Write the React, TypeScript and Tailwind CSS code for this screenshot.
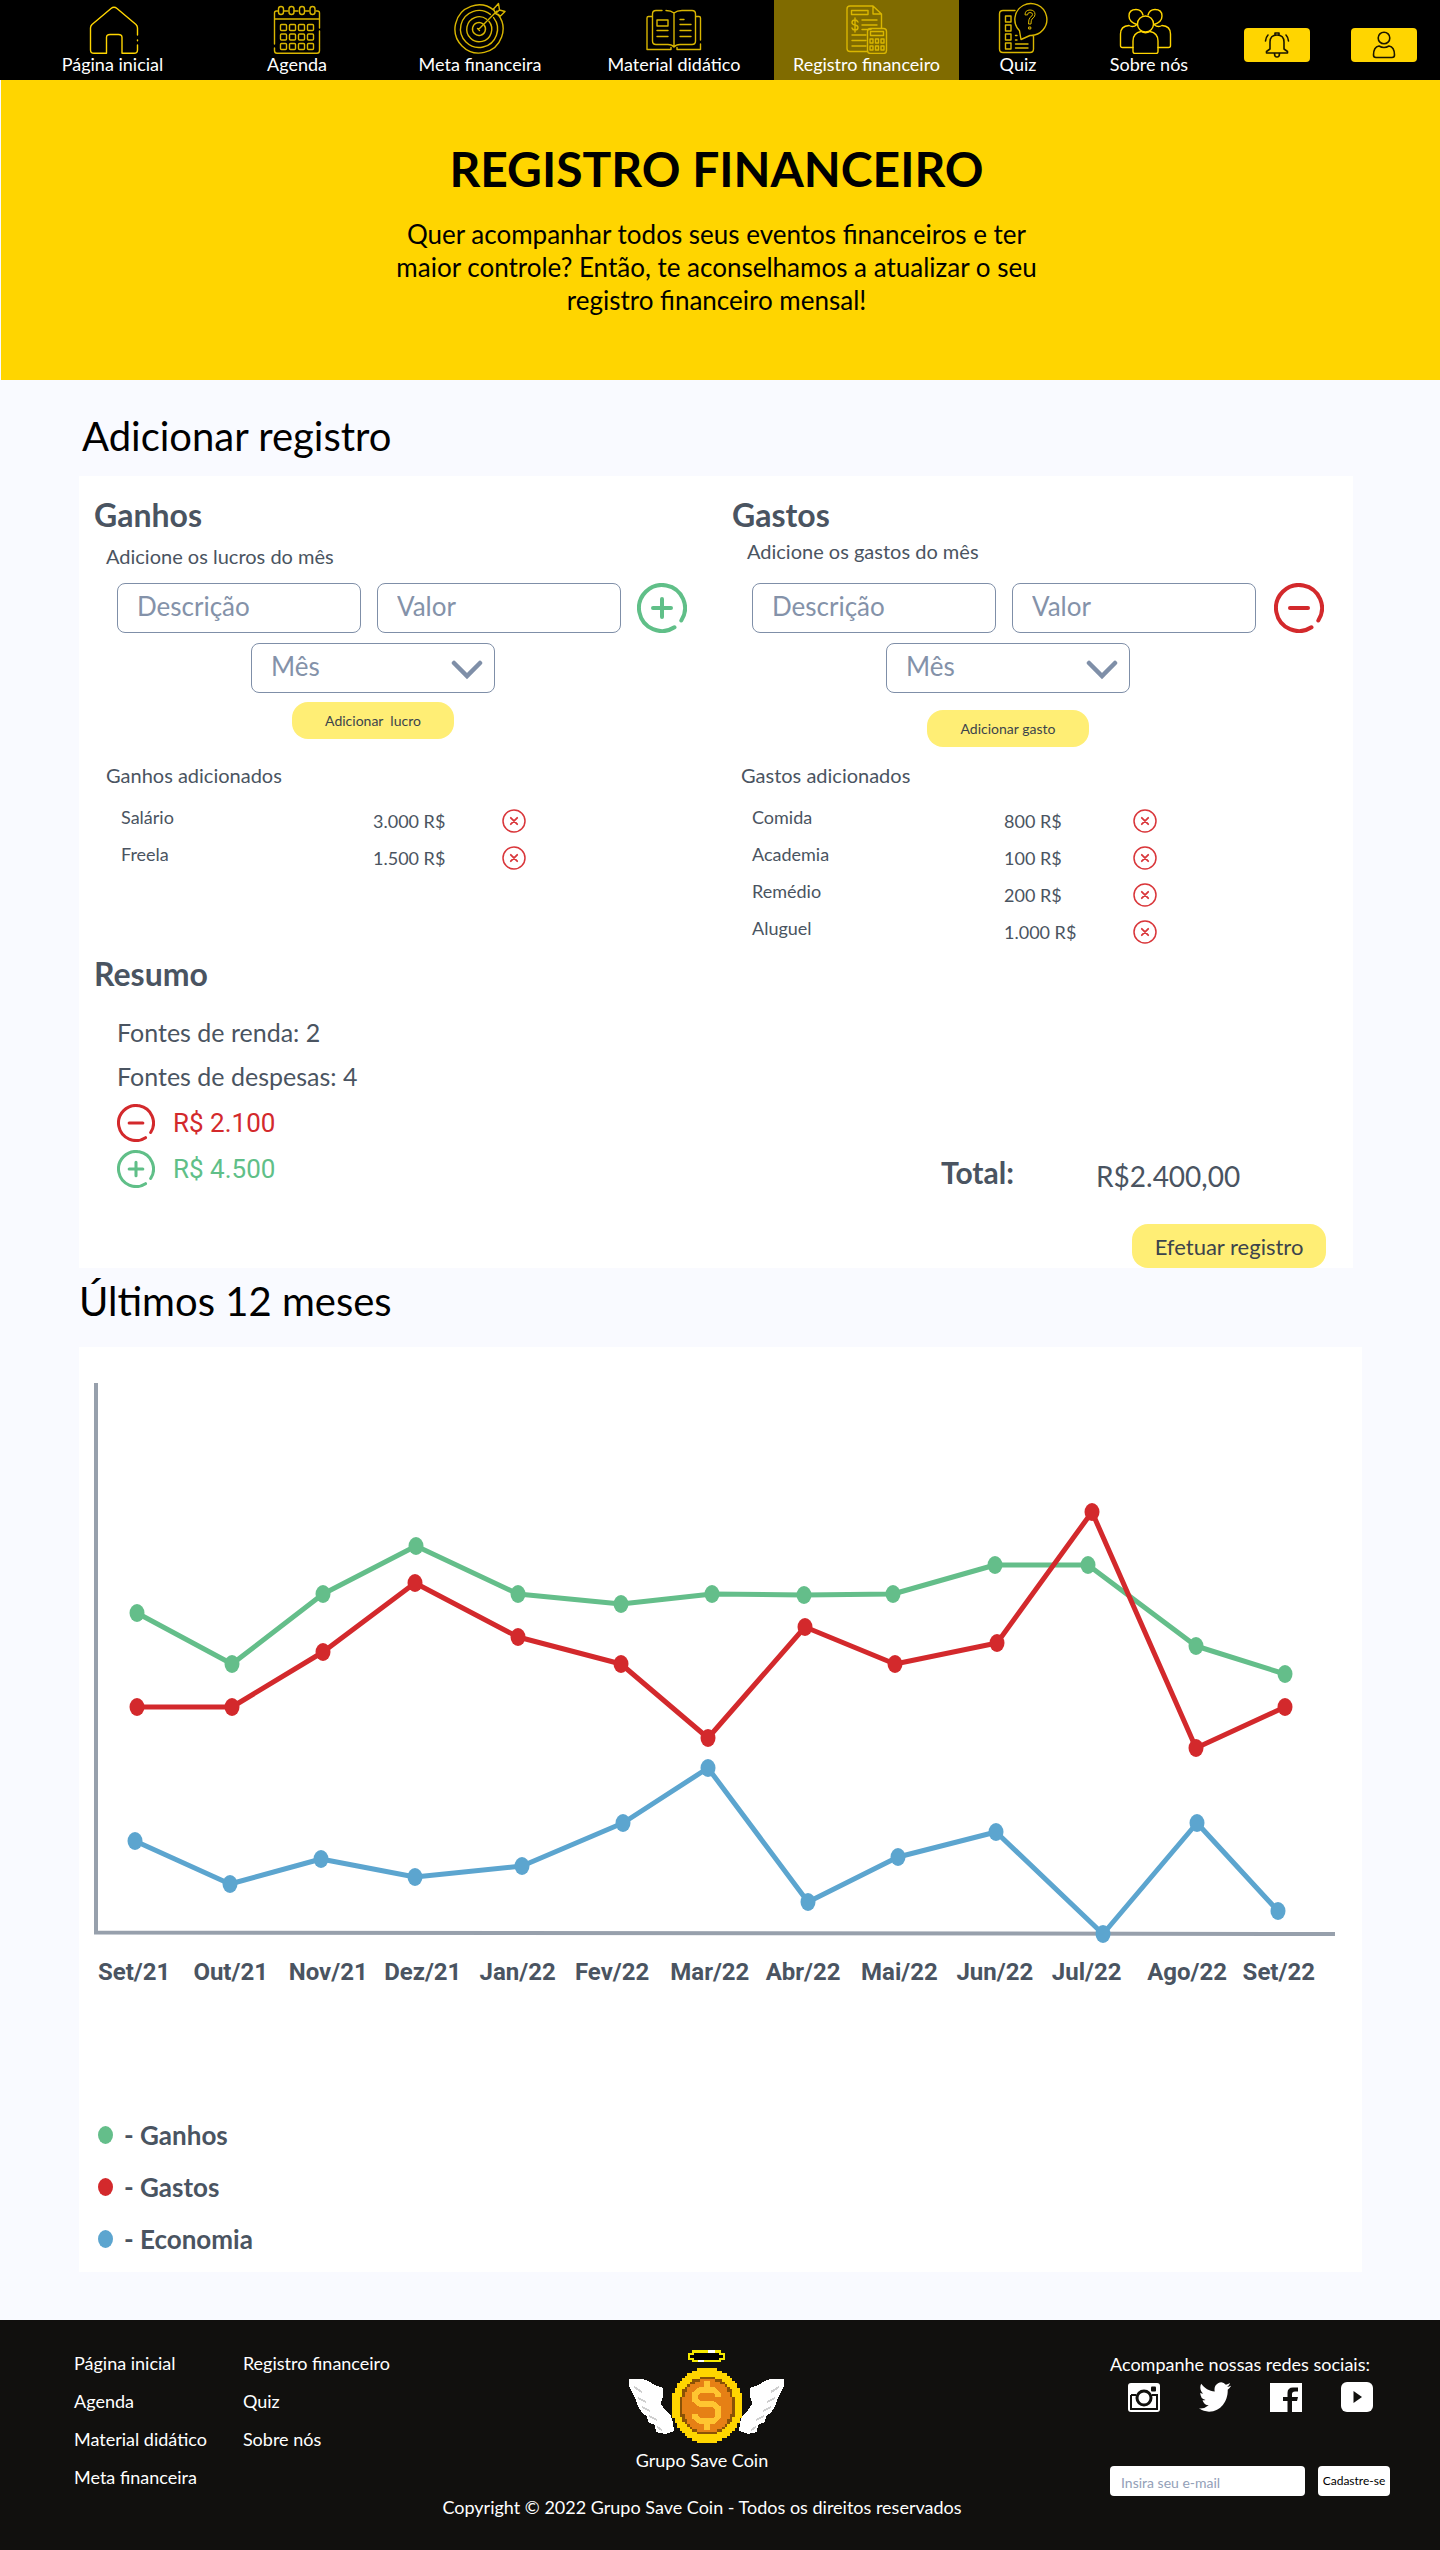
import type { ReactNode } from "react";

function NavSvg({ children }: { children: ReactNode }) {
  return (
    <svg
      viewBox="0 0 60 54"
      className="h-[54px] w-[60px] shrink-0"
      fill="none"
      stroke="#d9b600"
      strokeWidth="1.4"
      strokeLinecap="round"
      strokeLinejoin="round"
      aria-hidden="true"
    >
      {children}
    </svg>
  );
}

function HomeIcon() {
  return (
    <NavSvg>
      <path
        stroke="#ffd500"
        d="M54.500 35V28Q54.500 26 53 24.500L34 8.500Q31 6 28 8.500L9 24.500Q7.500 26 7.500 28V50Q7.500 53.300 11 53.300H23.500V37.500Q23.500 34.500 27 34.500H35.500Q39 34.500 39 37.500V53.300H51Q54.500 53.300 54.500 50V45M54.500 40V40.800"
      />
    </NavSvg>
  );
}

function AgendaIcon() {
  return (
    <NavSvg>
      <path d="M11 11H9.500Q7.500 11 7.500 13V44M7.500 48V50.500Q7.500 53.300 10 53.300H50Q52.500 53.300 52.500 50.500V31M52.500 28V13Q52.500 11 50.500 11H49M17 11H21M27 11H31M38 11H42M8 19H52" />
      {[14, 24.5, 35, 45.5].map((x) => (
        <rect key={x} x={x - 2.5} y="6.5" width="5" height="8" rx="2.5" />
      ))}
      {[24.5, 34, 43.5].map((y) =>
        [13.5, 22.5, 31.5, 40.5].map((x) => (
          <rect key={`${x}-${y}`} x={x} y={y} width="6" height="6" rx="1" />
        ))
      )}
    </NavSvg>
  );
}

function TargetIcon() {
  return (
    <NavSvg>
      <path d="M47.900 14.200A24 24 0 1 1 43.800 10.100" />
      <path d="M43.600 17.600A18.500 18.500 0 1 1 40.400 14.400" />
      <path d="M38.900 21.300A12.500 12.500 0 1 1 36.700 19.200" />
      <path d="M34.100 25A6.500 6.500 0 1 1 33 23.900" />
      <path d="M28.500 29.500L47 11M45.500 13.500L43.500 9L48.500 3.500L49.500 10L55 11.500L50.500 16ZM49.500 10L45.500 13.500M27.500 28.500L29.500 30.500" />
    </NavSvg>
  );
}

function BookIcon() {
  return (
    <NavSvg>
      <path d="M30 13V45M30 13Q27 10.500 22 10.500M18 10.500H12Q8.500 10.500 8.500 14V41Q8.500 44.500 12 44.500H24Q28 44.500 30 47Q32 44.500 36 44.500H48Q51.500 44.500 51.500 41V14Q51.500 10.500 48 10.500H38Q33 10.500 30 13M8 16.500H4.500Q3 16.500 3 18V49.500H27V47.500M33 47.500V49.500H56.500V44M56.500 40V18Q56.500 16.500 55 16.500H52" />
      <path d="M13 20H24V26H13ZM13 30.500H24M13 36.500H24M36 19.500H40M36 24.500H47M36 30.500H47M36 36.500H47" />
    </NavSvg>
  );
}

function LedgerIcon() {
  return (
    <NavSvg>
      <path d="M30 51.500H13Q10 51.500 10 48.500V9Q10 6 13 6H36L44.500 14V28M36 6V14H44.500M14.500 10.500H31V14.500H14.500ZM25 20H40M25 25H40M25 29.500H34M15 35H29M15 40.500H29M15 46H29" />
      <path d="M21 22Q20 20 18 20Q15 20 15 22.500Q15 24.500 18 25Q21 25.500 21 27.500Q21 30 18 30Q15.500 30 15 28M18 18V32" />
      <rect x="30.5" y="28.5" width="19" height="25" rx="3" />
      <rect x="33.5" y="31.5" width="13" height="4" />
      {[39, 46].map((y) =>
        [33, 38.5, 44].map((x) => (
          <rect key={`${x}-${y}`} x={x} y={y} width="3" height="4" />
        ))
      )}
    </NavSvg>
  );
}

function QuizIcon() {
  return (
    <NavSvg>
      <path d="M27 10.500H15Q11.500 10.500 11.500 14V49Q11.500 52.500 15 52.500H42Q45.500 52.500 45.500 49V36M33 39.500L31.500 30.800A16 16 0 1 1 42 35.500Z" />
      {[16, 25, 34, 43].map((y) => (
        <rect key={y} x="17.5" y={y} width="5.5" height="6" />
      ))}
      <path d="M27.500 35.500H29M27.500 40H29M27.500 44H40M27.500 48H40" />
      <path d="M37 14.500Q37 10 42 10Q47 10 47 14.500Q47 17 44 19Q43 20 43 24H40.500Q40.500 19 42 17.500Q44.500 16 44.500 14.500Q44.500 12.500 42 12.500Q39.500 12.500 39.500 14.500ZM41 27H42.800V29H41Z" strokeWidth="1" />
    </NavSvg>
  );
}

function PeopleIcon() {
  return (
    <NavSvg>
      <g stroke="#ffd500">
        <path d="M18 24.500Q10 22 10 16Q10 9.500 17 9.500Q22.500 9.500 24 15M35 24.500Q43 22 43 16Q43 9.500 36 9.500Q30.500 9.500 29 15" />
        <circle cx="26.5" cy="24" r="8" />
        <path d="M14 47.500H3.500Q1.500 47.500 1.500 45.500V34Q1.500 26 10 25.500Q14 28 18 24.500M39 47.500H49.500Q51.500 47.500 51.500 45.500V34Q51.500 26 43 25.500Q39 28 35 24.500" />
        <path d="M14 51.500V41Q14 33 22 31.500Q26.500 34 31 31.500Q39 33 39 41V51.500Q39 53.500 37 53.500H16Q14 53.500 14 51.500Z" />
      </g>
    </NavSvg>
  );
}

const NAV: { label: string; icon: ReactNode; active?: boolean }[] = [
  { label: "Página inicial", icon: <HomeIcon /> },
  { label: "Agenda", icon: <AgendaIcon /> },
  { label: "Meta financeira", icon: <TargetIcon /> },
  { label: "Material didático", icon: <BookIcon /> },
  { label: "Registro financeiro", icon: <LedgerIcon />, active: true },
  { label: "Quiz", icon: <QuizIcon /> },
  { label: "Sobre nós", icon: <PeopleIcon /> },
];

function Header() {
  return (
    <header className="bg-black pl-[17px] pr-[23px]">
      <nav className="grid h-20 grid-cols-[191fr_178fr_188fr_200fr_185fr_118fr_144fr_196fr] text-white">
        {NAV.map((n) => (
          <a
            key={n.label}
            href="#"
            aria-current={n.active ? "page" : undefined}
            className={
              n.active
                ? "flex flex-col items-center bg-[#806b00] text-lg leading-5 whitespace-nowrap"
                : "flex flex-col items-center text-lg leading-5 whitespace-nowrap"
            }
          >
            {n.icon}
            {n.label}
          </a>
        ))}
        <div className="flex items-center justify-between pt-2.5 pl-[23px]">
          <button aria-label="Notificações" className="flex h-[34px] w-[66px] items-center justify-center rounded bg-[#ffd500]">
            <svg viewBox="0 0 26 28" className="h-7 w-[26px]" fill="none" stroke="#1a1600" strokeWidth="1.6" strokeLinecap="round" strokeLinejoin="round" aria-hidden="true">
              <path d="M11 4V2H15V4M2.500 22V20.500L6 18V11Q6 4 13 4Q20 4 20 11V18L23.500 20.500V22ZM10.500 22.500Q10.500 26 13 26Q15.500 26 15.500 22.500M4 4Q2 6 1.500 10M22 4Q24 6 24.500 10" />
            </svg>
          </button>
          <button aria-label="Perfil" className="flex h-[34px] w-[66px] items-center justify-center rounded bg-[#ffd500]">
            <svg viewBox="0 0 26 28" className="h-7 w-[26px]" fill="none" stroke="#1a1600" strokeWidth="1.6" strokeLinecap="round" strokeLinejoin="round" aria-hidden="true">
              <circle cx="13" cy="7" r="5.8" />
              <path d="M8 15Q2.500 16 2.500 24Q2.500 26.500 5 26.500H21Q23.500 26.500 23.500 24Q23.500 16 18 15Q13 18 8 15Z" />
            </svg>
          </button>
        </div>
      </nav>
    </header>
  );
}

function PlusMinus({ plus, className }: { plus?: boolean; className: string }) {
  return (
    <svg viewBox="0 0 50 50" className={className} fill="none" stroke="currentColor" strokeWidth="4" strokeLinecap="round" aria-hidden="true">
      <path d="M37.500 44.300A23 23 0 1 1 44.300 37.500" />
      <path d={plus ? "M16 25H34M25 16V34" : "M16 25H34"} />
    </svg>
  );
}

type Entry = { name: string; value: string };

const FIELD = "h-[50px] w-[244px] rounded-lg border border-[#7f8fa8] bg-white pl-[19px] pb-1 text-[26px] text-[#8492a9] placeholder:text-[#8492a9]";

function EntryForm(props: {
  kind: "ganho" | "gasto";
  title: string;
  subtitle: string;
  action: string;
  listTitle: string;
  entries: Entry[];
  s: { col: string; sub: string; form: string; icon: string; button: string; list: string; table: string };
}) {
  const { kind, title, subtitle, action, listTitle, entries, s } = props;
  return (
    <section className={s.col}>
      <h2 className="text-[32px] leading-[38px] font-bold">{title}</h2>
      <p className={s.sub}>{subtitle}</p>
      <form className={s.form} onSubmit={(e) => e.preventDefault()}>
        <div className="flex items-center">
          <div className="flex gap-4">
            <input aria-label={`Descrição do ${kind}`} placeholder="Descrição" className={FIELD} />
            <input aria-label={`Valor do ${kind}`} placeholder="Valor" className={FIELD} />
          </div>
          <button aria-label={`Incluir ${kind}`} className={s.icon}>
            <PlusMinus plus={kind === "ganho"} className="size-[50px]" />
          </button>
        </div>
        <div className="mt-2.5 flex w-[504px] flex-col items-center pl-2">
          <div className="relative">
            <select aria-label={`Mês do ${kind}`} className={`${FIELD} appearance-none`}>
              <option>Mês</option>
            </select>
            <svg viewBox="0 0 32 20" className="pointer-events-none absolute top-[17px] right-3 h-5 w-8" fill="none" stroke="#7f8fa8" strokeWidth="4.5" strokeLinecap="round" strokeLinejoin="miter" aria-hidden="true">
              <path d="M3 3L16 16L29 3" />
            </svg>
          </div>
          <button className={s.button}>{action}</button>
        </div>
      </form>
      <h3 className={s.list}>{listTitle}</h3>
      <table className={s.table}>
        <tbody>
          {entries.map((e) => (
            <tr key={e.name} className="h-[37px]">
              <td className="w-[252px] pb-2">{e.name}</td>
              <td className="w-[129px]">{e.value}</td>
              <td>
                <button aria-label={`Remover ${e.name}`} className="block text-[#d9363a]">
                  <svg viewBox="0 0 24 24" className="size-6" fill="none" stroke="currentColor" strokeWidth="1.5" strokeLinecap="round" aria-hidden="true">
                    <circle cx="12" cy="12" r="11" />
                    <path d="M8.800 8.800L15.200 15.200M15.200 8.800L8.800 15.200" strokeWidth="1.8" />
                  </svg>
                </button>
              </td>
            </tr>
          ))}
        </tbody>
      </table>
    </section>
  );
}

const ACTION = "h-[37px] w-[162px] rounded-2xl bg-[#ffee75] text-sm text-[#3c444c] whitespace-pre";

function Register() {
  return (
    <div className="mr-[9px] bg-white pt-5 text-[#4a5461]">
      <div className="grid grid-cols-2">
        <EntryForm
          kind="ganho"
          title="Ganhos"
          subtitle="Adicione os lucros do mês"
          action="Adicionar  lucro"
          listTitle="Ganhos adicionados"
          entries={[
            { name: "Salário", value: "3.000 R$" },
            { name: "Freela", value: "1.500 R$" },
          ]}
          s={{
            col: "pl-[15px]",
            sub: "mt-2.5 ml-3 text-xl leading-6",
            form: "mt-[15px] ml-[23px]",
            icon: "ml-4 text-[#60bf88]",
            button: `${ACTION} mt-[9px]`,
            list: "mt-6 ml-3 text-xl leading-6",
            table: "mt-[15px] ml-[27px] text-lg leading-6",
          }}
        />
        <EntryForm
          kind="gasto"
          title="Gastos"
          subtitle="Adicione os gastos do mês"
          action="Adicionar gasto"
          listTitle="Gastos adicionados"
          entries={[
            { name: "Comida", value: "800 R$" },
            { name: "Academia", value: "100 R$" },
            { name: "Remédio", value: "200 R$" },
            { name: "Aluguel", value: "1.000 R$" },
          ]}
          s={{
            col: "pl-4",
            sub: "mt-[5px] ml-[15px] text-xl leading-6",
            form: "mt-5 ml-5",
            icon: "ml-[18px] text-[#d3292c]",
            button: `${ACTION} mt-[17px]`,
            list: "mt-4 ml-[9px] text-xl leading-6",
            table: "mt-[15px] ml-5 text-lg leading-6",
          }}
        />
      </div>
      <div className="flex items-end justify-between pr-[27px] pl-[15px]">
        <section className="mt-[5px] pb-20">
          <h2 className="text-[32px] leading-[38px] font-bold">Resumo</h2>
          <div className="mt-[17px] ml-[23px] text-[25px] leading-[44px]">
            <p>Fontes de renda: 2</p>
            <p>Fontes de despesas: 4</p>
            <p className="mt-1.5 flex items-center gap-[18px] font-[Roboto,sans-serif] text-[26px] leading-[38px] text-[#d3292c]">
              <PlusMinus className="size-[38px]" />
              R$ 2.100
            </p>
            <p className="mt-2 flex items-center gap-[18px] font-[Roboto,sans-serif] text-[26px] leading-[38px] text-[#60bf88]">
              <PlusMinus plus className="size-[38px]" />
              R$ 4.500
            </p>
          </div>
        </section>
        <div className="flex w-[385px] flex-col">
          <p className="flex text-[30px] leading-9">
            <b className="w-[155px]">Total:</b>
            <span className="pt-1 text-[28px]">R$2.400,00</span>
          </p>
          <button className="mt-[30px] h-11 w-[194px] self-end rounded-2xl bg-[#ffee75] text-[22px] text-[#3c444c]">Efetuar registro</button>
        </div>
      </div>
    </div>
  );
}

const MONTHS = ["Set/21", "Out/21", "Nov/21", "Dez/21", "Jan/22", "Fev/22", "Mar/22", "Abr/22", "Mai/22", "Jun/22", "Jul/22", "Ago/22", "Set/22"];

const SERIES = [
  {
    name: "Ganhos",
    color: "#64be8a",
    dot: "bg-[#64be8a]",
    points: [[58, 266], [153, 317], [244, 247], [337, 199], [439, 247], [542, 257], [633, 247], [725, 248], [814, 247], [916, 218], [1009, 218], [1117, 299], [1206, 327]],
  },
  {
    name: "Gastos",
    color: "#d3292c",
    dot: "bg-[#d3292c]",
    points: [[58, 360], [153, 360], [244, 305], [336, 236], [439, 290], [542, 317], [629, 391], [726, 280], [816, 317], [918, 296], [1013, 165], [1117, 401], [1206, 360]],
  },
  {
    name: "Economia",
    color: "#5ca5cf",
    dot: "bg-[#5ca5cf]",
    points: [[56, 494], [151, 537], [242, 512], [336, 530], [443, 519], [544, 476], [629, 421], [729, 555], [819, 510], [917, 485], [1024, 587], [1118, 476], [1199, 564]],
  },
];

function Chart() {
  return (
    <div className="bg-white pb-[7px] text-[#4a5461]">
      <svg viewBox="0 0 1283 600" className="block w-full" role="img" aria-label="Ganhos, gastos e economia nos últimos 12 meses">
        <path d="M17 36V585.500L1256 587" fill="none" stroke="#97a0ac" strokeWidth="4" />
        {SERIES.map((s) => (
          <g key={s.name} fill={s.color}>
            <polyline points={s.points.map((p) => p.join(",")).join(" ")} fill="none" stroke={s.color} strokeWidth="5" strokeLinejoin="round" />
            {s.points.map(([x, y]) => (
              <ellipse key={x} cx={x} cy={y} rx="7.5" ry="9" />
            ))}
          </g>
        ))}
      </svg>
      <div className="mt-[11px] grid grid-cols-13 pr-6 pl-[19px] font-[Roboto,sans-serif] text-2xl leading-7 font-bold">
        {MONTHS.map((m) => (
          <span key={m}>{m}</span>
        ))}
      </div>
      <ul className="mt-[123px] ml-[19px] text-[26px] leading-[52px] font-bold">
        {SERIES.map((s) => (
          <li key={s.name} className="flex items-center gap-[11px]">
            <span className={`h-[18px] w-[15px] rounded-[50%] ${s.dot}`} />- {s.name}
          </li>
        ))}
      </ul>
    </div>
  );
}

/* An ellipse built from rows of square steps, for the pixel-art coin. */
function steppedEllipse(cx: number, cy: number, rx: number, ry: number) {
  const cell = 2.5;
  const rows = Math.round((2 * ry) / cell);
  let d = "";
  for (let i = 0; i < rows; i++) {
    const y = cy - ry + i * cell;
    const t = (y + cell / 2 - cy) / ry;
    const half = Math.round((rx * Math.sqrt(Math.max(0, 1 - t * t))) / cell) * cell;
    d += `M${cx - half} ${y}h${2 * half}v${cell + 0.2}h${-2 * half}z`;
  }
  return d;
}

function Wing() {
  return (
    <g>
      <path
        fill="#fff"
        d="M1 29H15L20 31L27 35L35 38V47L32.500 53L37 60L43 66L45 73L46 81L37 84L28 82L27 75L20 72L19 66L14 63L9.500 55L7 48L4 42L1 36Z"
      />
      <path fill="none" stroke="#cfcfcf" strokeWidth="2" d="M6 37L14 42M10 48L18 52M14 57L22 61M21 66L29 70M29 77L34 80" />
    </g>
  );
}

function Logo() {
  return (
    <svg viewBox="-8 0 164 94" className="h-[94px] w-[164px]" shapeRendering="crispEdges" role="img" aria-label="Grupo Save Coin">
      <path d="M65 1.500H92V4H96V9H92V11H65V9H61V4H65Z" fill="#000" stroke="#f4e800" strokeWidth="2.5" />
      <path d="M80 1.500H87M70 11H76" stroke="#fff" strokeWidth="2.5" />
      <Wing />
      <g transform="translate(157 0) scale(-1 1)">
        <Wing />
      </g>
      <path fill="#ffd500" d={steppedEllipse(79, 55.5, 36, 37.5)} />
      <path fill="#8a5206" d={steppedEllipse(79, 55.5, 28, 29)} />
      <path fill="#e68015" d={steppedEllipse(79, 55.5, 25.5, 26.5)} />
      <path d="M90 47V44L86 40H72L67 44V50L72 54H85L90 58V67L86 71H72L67 67V64M79 31V40M79 71V80" fill="none" stroke="#ffc531" strokeWidth="5.5" />
    </svg>
  );
}

const FOOT_1 = ["Página inicial", "Agenda", "Material didático", "Meta financeira"];
const FOOT_2 = ["Registro financeiro", "Quiz", "Sobre nós"];

function Footer() {
  return (
    <footer className="grid grid-cols-[minmax(0,446fr)_minmax(0,512fr)_minmax(0,482fr)] bg-[#11100e] pb-[31px] text-lg leading-6 text-white">
      <nav className="flex gap-9 pt-6 pl-[74px] leading-[38px] whitespace-nowrap">
        <ul>
          {FOOT_1.map((t) => (
            <li key={t}><a href="#">{t}</a></li>
          ))}
        </ul>
        <ul>
          {FOOT_2.map((t) => (
            <li key={t}><a href="#">{t}</a></li>
          ))}
        </ul>
      </nav>
      <div className="flex flex-col items-center pt-[30px] whitespace-nowrap">
        <Logo />
        <p className="mt-1">Grupo Save Coin</p>
        <p className="mt-[23px]">Copyright © 2022 Grupo Save Coin - Todos os direitos reservados</p>
      </div>
      <div className="pt-8 pl-[152px] whitespace-nowrap">
        <p>Acompanhe nossas redes sociais:</p>
        <div className="mt-1.5 ml-[18px] flex gap-[39px]">
          <a href="#" aria-label="Instagram">
            <svg viewBox="0 0 32 30" className="h-[30px] w-8" aria-hidden="true">
              <rect x="0" y="1" width="32" height="29" rx="3" fill="#fff" />
              <path d="M3 13H8M24 13H29V27H3V13" fill="none" stroke="#11100e" strokeWidth="2" />
              <circle cx="16" cy="16" r="8" fill="#fff" />
              <circle cx="16" cy="16" r="7" fill="none" stroke="#11100e" strokeWidth="3" />
              <rect x="23" y="4.5" width="5" height="5" rx="1" fill="#11100e" />
            </svg>
          </a>
          <a href="#" aria-label="Twitter">
            <svg viewBox="0 2 24 20" preserveAspectRatio="none" className="h-[30px] w-8" fill="#fff" aria-hidden="true">
              <path d="M23.950 4.570a10 10 0 0 1-2.820.770 4.960 4.960 0 0 0 2.160-2.720c-.950.550-2 .950-3.120 1.180a4.920 4.920 0 0 0-8.380 4.480C7.690 8.090 4.070 6.130 1.640 3.160a4.820 4.820 0 0 0-.670 2.480c0 1.710.870 3.210 2.190 4.100a4.900 4.900 0 0 1-2.230-.620v.060a4.920 4.920 0 0 0 3.950 4.830 5 5 0 0 1-2.210.080 4.940 4.940 0 0 0 4.600 3.420A9.870 9.870 0 0 1 0 19.540a13.940 13.940 0 0 0 7.550 2.210c9.050 0 14-7.500 14-13.980 0-.210 0-.420-.020-.630a9.940 9.940 0 0 0 2.460-2.550z" />
            </svg>
          </a>
          <a href="#" aria-label="Facebook">
            <svg viewBox="0 0 32 30" className="h-[30px] w-8" aria-hidden="true">
              <path fill="#fff" d="M0 1H32V30H22V19H27L28 15H22V12Q22 9.500 25 9.500H28V5.500H23Q17.500 5.500 17.500 11V15H13V19H17.500V30H0Z" />
            </svg>
          </a>
          <a href="#" aria-label="YouTube">
            <svg viewBox="0 0 32 30" className="h-[30px] w-8" aria-hidden="true">
              <rect width="32" height="30" rx="6" fill="#fff" />
              <path d="M12.500 9V21L21 15Z" fill="#11100e" />
            </svg>
          </a>
        </div>
        <form className="mt-[54px] flex gap-[13px]" onSubmit={(e) => e.preventDefault()}>
          <input type="email" aria-label="E-mail" placeholder="Insira seu e-mail" className="h-[30px] w-[195px] rounded bg-white pt-0.5 pl-[11px] text-sm text-black placeholder:text-[#93a0b8]" />
          <button className="h-[30px] w-[72px] rounded bg-white text-xs text-black">Cadastre-se</button>
        </form>
      </div>
    </footer>
  );
}

export default function App() {
  return (
    <div className="min-h-screen bg-[#f9faff] font-[Lato,sans-serif] text-black">
      <Header />
      <section className="ml-px bg-[#ffd500] pt-[60px] pr-2 pb-[63px] text-center">
        <h1 className="text-5xl leading-[58px] font-bold">REGISTRO FINANCEIRO</h1>
        <p className="mx-auto mt-5 max-w-[670px] text-[26px] leading-[33px]">
          Quer acompanhar todos seus eventos financeiros e ter maior controle? Então, te aconselhamos a atualizar o seu registro financeiro mensal!
        </p>
      </section>
      <main className="pt-8 pr-[78px] pb-12 pl-[79px]">
        <h2 className="mb-4 ml-[3px] text-[40px] leading-[48px]">Adicionar registro</h2>
        <Register />
        <h2 className="mt-[9px] mb-[22px] text-[40px] leading-[48px]">Últimos 12 meses</h2>
        <Chart />
      </main>
      <Footer />
    </div>
  );
}
